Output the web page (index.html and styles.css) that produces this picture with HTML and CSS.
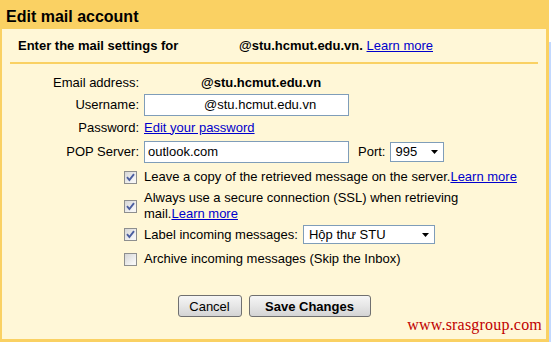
FILE: index.html
```html
<!DOCTYPE html>
<html lang="en">
<head>
    <meta charset="UTF-8">
    <title>Edit mail account</title>
    <link rel="stylesheet" href="styles.css">
</head>
<body>
    <div class="dialog">
        <h1 class="dialog-title">Edit mail account</h1>
        <div class="panel">
            <p class="intro"><b>Enter the mail settings for <span class="blank"></span>@stu.hcmut.edu.vn.</b> <a href="#">Learn more</a></p>

            <div class="settings">
                <span class="field-label">Email address:</span>
                <span class="field"><b><span class="blank"></span>@stu.hcmut.edu.vn</b></span>

                <label class="field-label" for="username">Username:</label>
                <span class="field"><input type="text" id="username" class="text-input username" value="@stu.hcmut.edu.vn"></span>

                <span class="field-label">Password:</span>
                <span class="field"><a href="#">Edit your password</a></span>

                <label class="field-label" for="server">POP Server:</label>
                <span class="field">
                    <input type="text" id="server" class="text-input" value="outlook.com">
                    <span class="port-label">Port:</span>
                    <span class="select port-select">995
                        <svg class="arrow" width="7" height="4" viewBox="0 0 7 4"><polygon points="0,0 7,0 3.5,4" fill="#000"/></svg>
                    </span>
                </span>

                <span class="check-cell"><span class="checkbox checked"><svg width="11" height="11" viewBox="0 0 11 11"><path d="M2 5.2 L4.4 8 L9 2.2" fill="none" stroke="#4b5ea0" stroke-width="1.9"/></svg></span></span>
                <span class="field option">Leave a copy of the retrieved message on the server.<a href="#">Learn more</a></span>

                <span class="check-cell"><span class="checkbox checked"><svg width="11" height="11" viewBox="0 0 11 11"><path d="M2 5.2 L4.4 8 L9 2.2" fill="none" stroke="#4b5ea0" stroke-width="1.9"/></svg></span></span>
                <span class="field option wrap">Always use a secure connection (SSL) when retrieving mail.<a href="#">Learn more</a></span>

                <span class="check-cell"><span class="checkbox checked"><svg width="11" height="11" viewBox="0 0 11 11"><path d="M2 5.2 L4.4 8 L9 2.2" fill="none" stroke="#4b5ea0" stroke-width="1.9"/></svg></span></span>
                <span class="field option">Label incoming messages:
                    <span class="select label-select">Hộp thư STU
                        <svg class="arrow" width="7" height="4" viewBox="0 0 7 4"><polygon points="0,0 7,0 3.5,4" fill="#000"/></svg>
                    </span>
                </span>

                <span class="check-cell"><span class="checkbox"></span></span>
                <span class="field option">Archive incoming messages (Skip the Inbox)</span>
            </div>

            <div class="actions">
                <button class="btn btn-cancel">Cancel</button>
                <button class="btn btn-primary">Save Changes</button>
            </div>

            <div class="watermark">www.srasgroup.com</div>
        </div>
    </div>
</body>
</html>
```

FILE: styles.css
```css
* {
    margin: 0;
    padding: 0;
    box-sizing: border-box;
}

:root {
    --frame: #fad163;
    --panel: #fff7d7;
    --link: #0000cc;
    --field-border: #7f9db9;
}

body {
    font-family: 'Liberation Sans', Arial, sans-serif;
    font-size: 13px;
    color: #000;
    background: linear-gradient(#fff 42px, #c3d9ff 42px);
    width: 551px;
    height: 342px;
}

a {
    color: var(--link);
}

.dialog {
    width: 549px;
    height: 342px;
    background-color: var(--frame);
    padding: 0 3px 3px 2px;
    display: flex;
    flex-direction: column;
}

.dialog-title {
    height: 29px;
    padding: 7px 4px 0;
    font-size: 16px;
    line-height: 20px;
    font-weight: bold;
}

.panel {
    flex: 1;
    position: relative;
    background-color: var(--panel);
}

.intro {
    margin: 0 8px;
    padding: 9px 8px 8px;
    line-height: 16px;
    border-bottom: 2px solid var(--frame);
}

.blank {
    display: inline-block;
    width: 57px;
}

.settings {
    margin-top: 8px;
    display: grid;
    grid-template-columns: 137px auto;
    grid-template-rows: 21px 23px 23px 25px 26px 32px 25px 24px;
    column-gap: 5px;
    align-items: center;
    line-height: 16px;
}

.field-label {
    text-align: right;
}

.field {
    display: flex;
    align-items: center;
}

.text-input {
    width: 205px;
    height: 22px;
    border: 1px solid var(--field-border);
    background: #fff;
    padding: 0 3px;
    font-family: inherit;
    font-size: 13px;
    color: #000;
    outline: none;
}

.username {
    text-indent: 56px;
}

.port-label {
    margin-left: 9px;
    margin-right: 5px;
}

.select {
    display: flex;
    align-items: center;
    justify-content: space-between;
    background: #fff;
    border: 1px solid var(--field-border);
}

.port-select {
    width: 54px;
    height: 20px;
    padding: 0 5px 0 4px;
}

.label-select {
    width: 132px;
    height: 19px;
    padding: 0 5px 0 5px;
    margin-left: 5px;
}

.check-cell {
    display: flex;
    justify-content: flex-end;
    padding-right: 2px;
}

.checkbox {
    width: 13px;
    height: 13px;
    border: 1px solid #8e8f8f;
    background: linear-gradient(135deg, #d6d6d6, #f6f6f6 80%);
    display: flex;
}

.option.wrap {
    display: block;
    width: 376px;
}

.actions {
    margin-top: 24px;
    display: flex;
    justify-content: center;
    gap: 7px;
}

.btn {
    height: 22px;
    font-family: inherit;
    font-size: 13px;
    color: #000;
    border: 1px solid #707070;
    border-radius: 3px;
    background: linear-gradient(#f6f6f6, #e6e6e6 50%, #d4d4d4);
}

.btn-cancel {
    width: 64px;
}

.btn-primary {
    width: 122px;
    font-weight: bold;
}

.watermark {
    position: absolute;
    right: 4px;
    bottom: 5px;
    font-family: 'Liberation Serif', 'Times New Roman', serif;
    font-size: 16px;
    line-height: 18px;
    letter-spacing: 0.2px;
    color: #c00000;
}
```
